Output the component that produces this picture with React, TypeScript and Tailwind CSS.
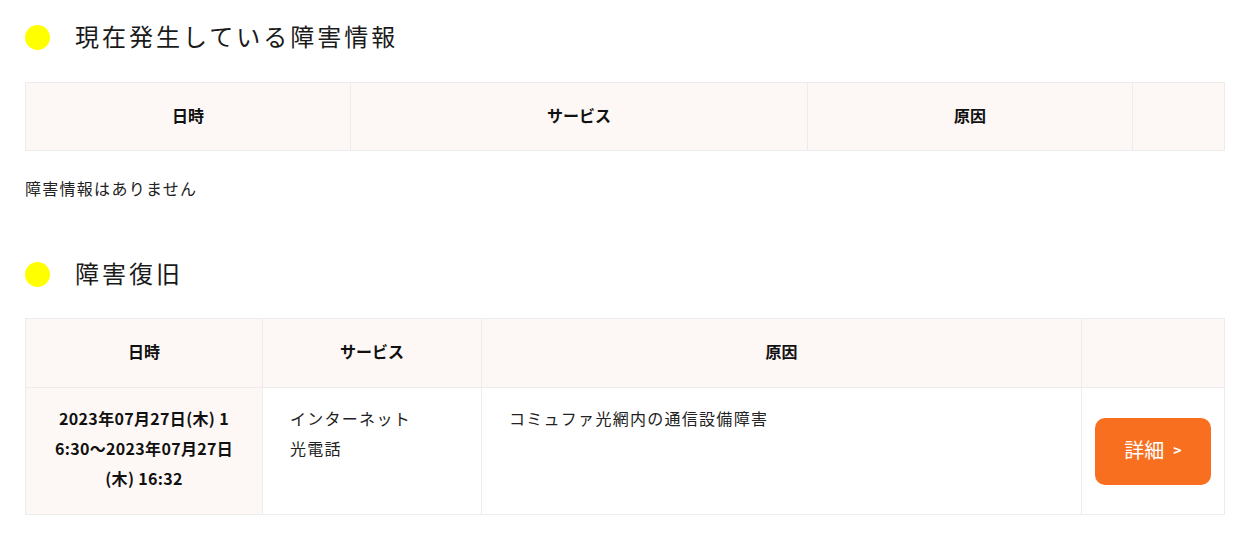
const font = { fontFamily: '"Noto Sans CJK JP", "Noto Sans", sans-serif' };

function Heading({ children }: { children: React.ReactNode }) {
  return (
    <div className="flex h-[50px] items-center">
      <span className="h-[25px] w-[25px] rounded-full bg-[#ffff00]" />
      <h2 className="ml-[25px] pb-[2px] text-[24px] font-normal leading-none tracking-[3px] text-[#1a1a1a]">
        {children}
      </h2>
    </div>
  );
}

const th = "border border-[#ececec] bg-[#fdf8f5] pb-[4px] text-center text-[16px] font-bold text-[#111]";

export default function App() {
  return (
    <div className="min-h-screen bg-white px-[25px] pt-[12px] text-[#222]" style={font}>
      <Heading>現在発生している障害情報</Heading>

      <table className="mt-[20px] w-[1199px] table-fixed border-collapse">
        <colgroup>
          <col className="w-[325px]" />
          <col className="w-[457px]" />
          <col className="w-[325px]" />
          <col className="w-[92px]" />
        </colgroup>
        <thead>
          <tr className="h-[68px]">
            <th className={th}>日時</th>
            <th className={th}>サービス</th>
            <th className={th}>原因</th>
            <th className={th}></th>
          </tr>
        </thead>
      </table>

      <p className="mt-[25px] text-[16px] leading-[24px] tracking-[0.08em]">障害情報はありません</p>

      <div className="mt-[49px]">
        <Heading>障害復旧</Heading>
      </div>

      <table className="mt-[19px] w-[1199px] table-fixed border-collapse">
        <colgroup>
          <col className="w-[237px]" />
          <col className="w-[219px]" />
          <col className="w-[600px]" />
          <col className="w-[143px]" />
        </colgroup>
        <thead>
          <tr className="h-[69px]">
            <th className={th}>日時</th>
            <th className={th}>サービス</th>
            <th className={th}>原因</th>
            <th className={th}></th>
          </tr>
        </thead>
        <tbody>
          <tr className="h-[127px]">
            <td className="border border-[#ececec] bg-[#fdf8f5] px-[10px] pt-[15px] pb-[19px] align-top text-center text-[16px] font-bold leading-[30px] tracking-[0.02em] text-[#111]">
              <span className="block">2023年07月27日(木) 1</span>
              <span className="block">6:30〜2023年07月27日</span>
              <span className="block">(木) 16:32</span>
            </td>
            <td className="border border-[#ececec] px-[27px] pt-[15px] pb-[19px] align-top text-[16px] leading-[30px] tracking-[0.08em]">
              インターネット
              <br />
              光電話
            </td>
            <td className="border border-[#ececec] px-[27px] pt-[15px] pb-[19px] align-top text-[16px] leading-[30px] tracking-[0.08em]">
              コミュファ光網内の通信設備障害
            </td>
            <td className="border border-[#ececec] px-[13px] align-middle">
              <a
                href="#"
                className="flex h-[67px] w-[116px] items-center justify-center rounded-[10px] bg-[#f86f20] pb-[2px] text-white"
              >
                <span className="text-[20px] leading-none">詳細</span>
                <span className="ml-[9px] text-[14px] font-bold leading-none">&gt;</span>
              </a>
            </td>
          </tr>
        </tbody>
      </table>
    </div>
  );
}
